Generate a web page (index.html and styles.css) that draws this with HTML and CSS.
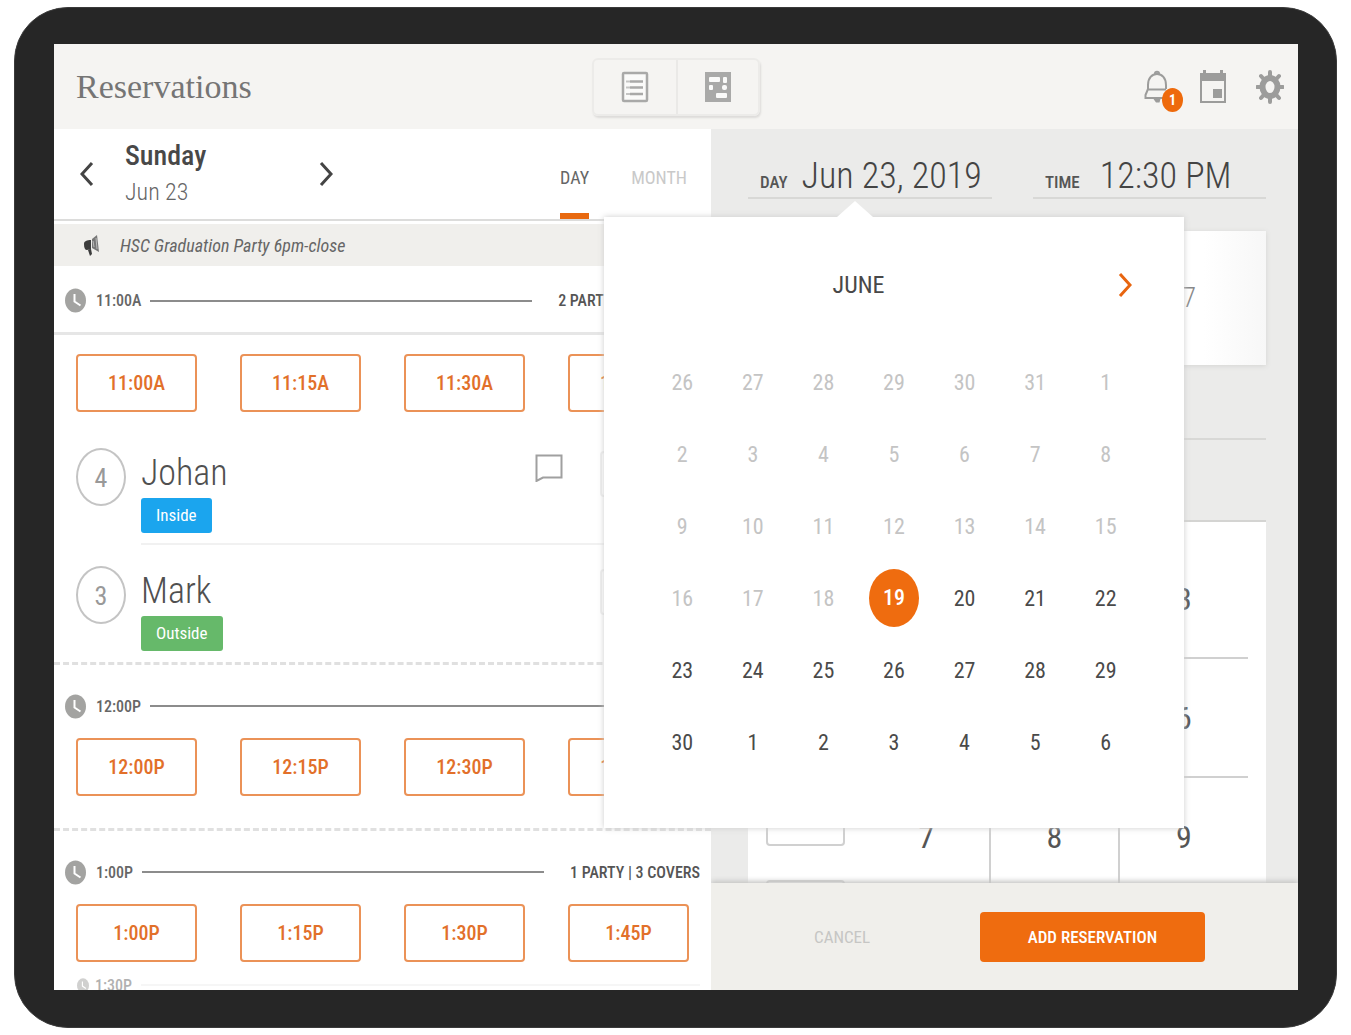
FILE: index.html
```html
<!DOCTYPE html>
<html lang="en">
<head>
  <meta charset="UTF-8">
  <meta name="viewport" content="width=device-width, initial-scale=1">
  <title>Reservations</title>
  <link rel="stylesheet" href="styles.css">
</head>
<body>
  <svg width="0" height="0" class="defs" aria-hidden="true">
    <symbol id="clock" viewBox="0 0 21 25" preserveAspectRatio="none">
      <ellipse cx="10.5" cy="12.5" rx="10.5" ry="12" fill="#a3a3a1"/>
      <path d="M9.5 6v7.5l6 4" fill="none" stroke="#fff" stroke-width="2"/>
    </symbol>
  </svg>

  <div class="tablet">
    <div class="screen">

      <header class="topbar">
        <h1>Reservations</h1>
        <div class="views">
          <button type="button" aria-label="List view">
            <svg width="28" height="32" viewBox="0 0 28 32">
              <rect x="2" y="2" width="24" height="28" rx="1" fill="#fafaf9" stroke="#a9a9a8" stroke-width="2.5"/>
              <path d="M9 10.500h13M9 16.500h13M9 23h13" stroke="#a9a9a8" stroke-width="2.500"/>
              <path d="M5 10.500h4M5 16.500h4M5 23h4" stroke="#c4c4c3" stroke-width="2"/>
            </svg>
          </button>
          <button type="button" aria-label="Floor view">
            <svg width="28" height="32" viewBox="0 0 28 32">
              <rect x="1" y="1" width="26" height="30" fill="#a9a9a8"/>
              <g fill="#fafaf9">
                <rect x="5" y="6" width="11" height="5" rx="1"/>
                <rect x="19" y="6" width="4" height="6" rx="1"/>
                <rect x="5" y="14" width="4" height="5" rx="1"/>
                <rect x="18" y="14" width="5" height="5" rx="2"/>
                <rect x="12" y="22" width="11" height="5" rx="1"/>
              </g>
            </svg>
          </button>
        </div>
        <div class="tools">
          <button type="button" class="tool" aria-label="Notifications">
            <svg width="26" height="34" viewBox="0 0 26 34" fill="none" stroke="#9c9c9b" stroke-width="2">
              <path d="M4 19v-4C4 8 8 4 13 4s9 4 9 11v4M4 19.500h18M4 19l-2.500 6v3h22M11 3.500a2 1.800 0 0 1 4 0"/>
              <path d="M9.500 29h7l-1 3.500h-3.500z" fill="#9c9c9b" stroke="none"/>
            </svg>
            <span class="badge">1</span>
          </button>
          <button type="button" class="tool" aria-label="Calendar">
            <svg width="28" height="34" viewBox="0 0 28 34" fill="#9c9c9b">
              <path d="M1 3h26v8H1zM4 0h3v4H4zM21 0h3v4h-3zM14 19h9v9h-9z"/>
              <rect x="2" y="4" width="24" height="28" fill="none" stroke="#9c9c9b" stroke-width="2"/>
            </svg>
          </button>
          <button type="button" class="tool" aria-label="Settings">
            <svg width="28" height="34" viewBox="0 0 28 34">
              <ellipse cx="14" cy="17" rx="7.500" ry="9" fill="none" stroke="#9c9c9b" stroke-width="6"/>
              <path d="M14 2v5M14 27v5M1 17h4M23 17h4M5 6l3.500 4M23 6l-3.500 4M5 28l3.500-4M23 28l-3.500-4" stroke="#9c9c9b" stroke-width="4" stroke-linecap="round"/>
            </svg>
          </button>
        </div>
      </header>

      <main class="columns">
        <section class="agenda">
          <div class="datebar">
            <button type="button" class="arrow" aria-label="Previous day">
              <svg width="14" height="26" viewBox="0 0 14 26"><path d="M12 2 2 13l10 11" fill="none" stroke="#444" stroke-width="3"/></svg>
            </button>
            <div class="date">
              <strong>Sunday</strong>
              <span>Jun 23</span>
            </div>
            <button type="button" class="arrow" aria-label="Next day">
              <svg width="14" height="26" viewBox="0 0 14 26"><path d="m2 2 10 11L2 24" fill="none" stroke="#444" stroke-width="3"/></svg>
            </button>
            <nav class="tabs">
              <a href="#day" class="active">DAY</a>
              <a href="#month">MONTH</a>
            </nav>
          </div>

          <p class="notice">
            <svg width="18" height="22" viewBox="0 0 18 22">
              <path d="M1 10c0-3 3-4 7-4v9l-4 1c-2 0-3-2-3-6zM5 16l3-1 1 5-2 2z" fill="#3c3c3c"/>
              <path d="M9 5l5-4 2 17-7-4z" fill="#777"/>
              <path d="M10 7l1 6M13 4l1 11" stroke="#bbb"/>
            </svg>
            HSC Graduation Party 6pm-close
          </p>

          <div class="hour pinned">
            <svg width="21" height="25"><use href="#clock"/></svg>
            <h2>11:00A</h2>
            <span class="rule"></span>
            <span class="count">2 PARTIES | 7 COVERS</span>
          </div>
          <div class="slots first">
            <button type="button">11:00A</button>
            <button type="button">11:15A</button>
            <button type="button">11:30A</button>
            <button type="button">11:45A</button>
          </div>

          <ul class="guests">
            <li>
              <span class="size">4</span>
              <div class="guest">
                <h3>Johan</h3>
                <span class="tag inside">Inside</span>
              </div>
              <svg class="note" width="28" height="28" viewBox="0 0 28 28"><path d="M1.500 1.500h25v22H8l-6.500 3.500z" fill="none" stroke="#a0a0a0" stroke-width="2"/></svg>
              <button type="button" class="seat" aria-label="Seat Johan"></button>
            </li>
            <li>
              <span class="size">3</span>
              <div class="guest">
                <h3>Mark</h3>
                <span class="tag outside">Outside</span>
              </div>
              <button type="button" class="seat" aria-label="Seat Mark"></button>
            </li>
          </ul>

          <div class="hour">
            <svg width="21" height="25"><use href="#clock"/></svg>
            <h2>12:00P</h2>
            <span class="rule"></span>
          </div>
          <div class="slots last">
            <button type="button">12:00P</button>
            <button type="button">12:15P</button>
            <button type="button">12:30P</button>
            <button type="button">12:45P</button>
          </div>

          <div class="hour">
            <svg width="21" height="25"><use href="#clock"/></svg>
            <h2>1:00P</h2>
            <span class="rule"></span>
            <span class="count">1 PARTY | 3 COVERS</span>
          </div>
          <div class="slots">
            <button type="button">1:00P</button>
            <button type="button">1:15P</button>
            <button type="button">1:30P</button>
            <button type="button">1:45P</button>
          </div>

          <div class="hour next">
            <svg width="12" height="15"><use href="#clock"/></svg>
            <h2>1:30P</h2>
            <span class="rule"></span>
          </div>
        </section>

        <form class="booking">
          <div class="fields">
            <label class="field day">
              <span>DAY</span>
              <input type="text" value="Jun 23, 2019">
            </label>
            <label class="field time">
              <span>TIME</span>
              <input type="text" value="12:30 PM">
            </label>
          </div>

          <div class="scroll">
            <div class="party">7</div>
            <div class="divider"></div>
            <div class="phone">
              <div class="lines">
                <input type="text" aria-label="Phone">
                <input type="text" aria-label="Extension">
              </div>
              <div class="keypad">
                <button type="button">1</button><button type="button">2</button><button type="button">3</button>
                <button type="button">4</button><button type="button">5</button><button type="button">6</button>
                <button type="button">7</button><button type="button">8</button><button type="button">9</button>
              </div>
            </div>
          </div>

          <div class="actions">
            <button type="button" class="cancel">CANCEL</button>
            <button type="submit" class="add">ADD RESERVATION</button>
          </div>

          <div class="picker">
            <div class="picker-head">
              <h2>JUNE</h2>
              <button type="button" aria-label="Next month">
                <svg width="14" height="26" viewBox="0 0 14 26"><path d="m2 2 10 11L2 24" fill="none" stroke="#e8650f" stroke-width="3"/></svg>
              </button>
            </div>
            <table>
              <tr class="past"><td>26</td><td>27</td><td>28</td><td>29</td><td>30</td><td>31</td><td>1</td></tr>
              <tr class="past"><td>2</td><td>3</td><td>4</td><td>5</td><td>6</td><td>7</td><td>8</td></tr>
              <tr class="past"><td>9</td><td>10</td><td>11</td><td>12</td><td>13</td><td>14</td><td>15</td></tr>
              <tr><td class="past">16</td><td class="past">17</td><td class="past">18</td><td><span class="today">19</span></td><td>20</td><td>21</td><td>22</td></tr>
              <tr><td>23</td><td>24</td><td>25</td><td>26</td><td>27</td><td>28</td><td>29</td></tr>
              <tr><td>30</td><td>1</td><td>2</td><td>3</td><td>4</td><td>5</td><td>6</td></tr>
            </table>
          </div>
        </form>
      </main>
    </div>
  </div>
</body>
</html>
```
FILE: styles.css
```css
* {
  box-sizing: border-box;
}
body {
  margin: 0;
  padding: 7px 14px;
  background: #fff;
  color: #555;
  font-family: "Roboto Condensed", "Liberation Sans Narrow", Roboto, sans-serif;
}
h1, h2, h3, p, ul {
  margin: 0;
  padding: 0;
  font-weight: normal;
}
button, input {
  margin: 0;
  padding: 0;
  border: 0;
  background: none;
  color: inherit;
  font-family: inherit;
}
svg {
  display: block;
  flex: none;
}
.defs {
  position: absolute;
}

/* device */
.tablet {
  height: calc(100vh - 14px);
  padding: 36px 38px 37px 39px;
  border: 1px solid #3a3a3a;
  border-radius: 54px;
  background: #262626;
}
.screen {
  display: flex;
  flex-direction: column;
  height: 100%;
  overflow: hidden;
  background: #fff;
}

/* top bar */
.topbar {
  display: grid;
  grid-template-columns: 1fr auto 1fr;
  align-items: center;
  flex: none;
  height: 85px;
  padding: 0 14px;
  background: #f5f4f2;
}
h1 {
  padding-left: 8px;
  color: #757575;
  font-family: "Liberation Serif", serif;
  font-size: 34px;
}
.views {
  display: flex;
  height: 58px;
  border: 2px solid #ecebe9;
  border-radius: 6px;
  box-shadow: 1px 2px 2px #dddcda;
}
.views button {
  display: flex;
  align-items: center;
  justify-content: center;
  width: 82px;
}
.views button + button {
  border-left: 2px solid #eae9e7;
}
.tools {
  display: flex;
  justify-content: flex-end;
  gap: 29px;
}
.tool {
  position: relative;
}
.badge {
  position: absolute;
  left: 18px;
  top: 18px;
  width: 21px;
  border-radius: 50%;
  background: #ee6a0c;
  color: #fff;
  font-size: 14px;
  font-weight: bold;
  line-height: 24px;
}

.columns {
  display: grid;
  grid-template-columns: 657fr 587fr;
  flex: 1;
  min-height: 0;
}

/* day list */
.agenda {
  overflow: hidden;
}
.datebar {
  display: flex;
  align-items: center;
  height: 92px;
  padding: 0 24px 0 26px;
  border-bottom: 2px solid #dcdcdb;
}
.date {
  width: 194px;
  margin-left: 31px;
}
.date strong, .date span {
  display: block;
  font-size: 28px;
  font-weight: 500;
  line-height: 36px;
}
.date strong {
  color: #484848;
}
.date span {
  color: #666;
  font-size: 24px;
  font-weight: 300;
}
.tabs {
  display: flex;
  align-self: stretch;
  gap: 42px;
  margin-left: auto;
}
.tabs a {
  padding-top: 12px;
  border-bottom: 6px solid transparent;
  color: #c9c9c9;
  font-size: 18px;
  line-height: 74px;
  text-decoration: none;
}
.tabs .active {
  border-color: #e8690f;
  color: #666;
}
.notice {
  display: flex;
  align-items: center;
  gap: 19px;
  height: 42px;
  margin-top: 3px;
  padding-left: 29px;
  background: #f0efec;
  color: #666;
  font-size: 18px;
  font-style: italic;
}
.hour {
  display: flex;
  align-items: center;
  height: 73px;
  padding: 9px 11px 0 11px;
}
.hour h2 {
  margin: 0 9px 0 10px;
  color: #666;
  font-size: 16px;
  font-weight: 500;
}
.rule {
  flex: 1;
  height: 2px;
  background: #8c8c8c;
}
.count {
  margin-left: 26px;
  color: #555;
  font-size: 16px;
  font-weight: 500;
}
.pinned {
  height: 69px;
  padding-top: 3px;
  border-bottom: 3px solid #e6e6e6;
}
.slots {
  display: grid;
  grid-template-columns: repeat(4, 1fr);
  gap: 43px;
  padding: 0 22px;
}
.slots button {
  height: 58px;
  border: 2px solid #eb9257;
  border-radius: 4px;
  color: #e2702a;
  font-size: 20px;
  font-weight: 500;
}
.first {
  padding-top: 19px;
}
.last {
  padding-bottom: 32px;
  border-bottom: 3px dashed #e0e0e0;
}
.guests {
  padding: 19px 0 0 22px;
  border-bottom: 3px dashed #e0e0e0;
  list-style: none;
}
.guests li {
  display: flex;
  align-items: flex-start;
  position: relative;
  height: 118px;
  padding-top: 17px;
}
.guests li:last-child {
  height: 113px;
}
.size {
  width: 50px;
  height: 58px;
  border: 2px solid #c4c4c4;
  border-radius: 50%;
  color: #999;
  font-size: 26px;
  line-height: 56px;
  text-align: center;
}
.guest {
  flex: 1;
  height: 97px;
  margin-left: 15px;
}
.guests li:first-child .guest {
  border-bottom: 2px solid #f1f1f1;
}
h3 {
  color: #505050;
  font-size: 36px;
  font-weight: 300;
  line-height: 50px;
}
.tag {
  display: inline-block;
  padding: 0 15px;
  border-radius: 3px;
  color: #fff;
  font-size: 17px;
  line-height: 35px;
}
.inside {
  background: #1ba5ee;
}
.outside {
  background: #66b96a;
}
.note {
  position: absolute;
  right: 148px;
  top: 23px;
}
.seat {
  position: absolute;
  right: 22px;
  top: 20px;
  width: 89px;
  height: 46px;
  border: 2px solid #eee;
  border-radius: 4px;
}
.next {
  height: 36px;
  padding: 10px 11px 0 23px;
  opacity: 0.5;
}
.next h2 {
  margin-left: 6px;
}
.next .rule {
  background: #eee;
}

/* booking form */
.booking {
  display: flex;
  position: relative;
  flex-direction: column;
  min-height: 0;
  background: #ebebea;
}
.fields {
  display: flex;
  justify-content: space-between;
  flex: none;
  height: 70px;
  padding: 0 32px 0 37px;
}
.field {
  display: flex;
  align-items: baseline;
  gap: 14px;
  padding: 25px 0 0 12px;
  border-bottom: 2px solid #d8d8d6;
}
.field span {
  font-size: 17px;
  font-weight: 500;
}
.field input {
  flex: 1;
  min-width: 0;
  color: #444;
  font-size: 36px;
  font-weight: 300;
  line-height: 44px;
}
.day {
  width: 244px;
}
.time {
  width: 233px;
}
.time input {
  padding-left: 6px;
}
.scroll {
  flex: 1;
  min-height: 0;
  overflow: hidden;
  padding: 32px 32px 0 37px;
}
.party {
  height: 134px;
  padding-right: 70px;
  background: linear-gradient(to right, #fff 88%, #f7f7f7);
  box-shadow: 0 1px 5px #d4d4d2;
  color: #888;
  font-size: 28px;
  font-weight: 300;
  line-height: 134px;
  text-align: right;
}
.divider {
  height: 75px;
  border-bottom: 2px solid #d8d8d6;
}
.phone {
  display: flex;
  gap: 18px;
  margin-top: 80px;
  padding: 18px;
  border-top: 2px solid #d4d4d2;
  background: #fff;
}
.lines {
  display: flex;
  flex-direction: column;
  gap: 34px;
  width: 79px;
  padding-top: 197px;
}
.lines input {
  width: 100%;
  height: 109px;
  border: 2px solid #d0d0d0;
  border-radius: 4px;
}
.keypad {
  display: grid;
  grid-template-columns: repeat(3, 1fr);
  align-content: start;
  flex: 1;
}
.keypad button {
  height: 119px;
  border: 0 solid #d0d0d0;
  border-width: 0 2px 2px 0;
  font-size: 32px;
}
.keypad button:nth-child(3n) {
  border-right: 0;
}
.actions {
  display: flex;
  z-index: 1;
  align-items: center;
  justify-content: space-between;
  flex: none;
  height: 107px;
  padding: 0 93px 0 103px;
  background: #f0efeb;
  box-shadow: 0 -2px 5px #c4c4c2;
  clip-path: inset(-8px 0 0 0);
}
.cancel {
  color: #c6c6c4;
  font-size: 17px;
}
.add {
  width: 225px;
  height: 50px;
  border-radius: 4px;
  background: #ef6c0f;
  color: #fff;
  font-size: 17px;
  font-weight: 500;
}

/* date picker */
.picker {
  position: absolute;
  z-index: 2;
  top: 88px;
  right: 114px;
  width: 580px;
  height: 611px;
  padding: 0 43px;
  background: #fff;
  box-shadow: 0 0 6px #ccc;
}
.picker::before {
  content: "";
  position: absolute;
  top: -16px;
  left: 233px;
  border: 18px solid transparent;
  border-top: 0;
  border-bottom: 16px solid #fff;
}
.picker-head {
  display: flex;
  align-items: center;
  height: 129px;
  padding: 6px 9px 0 0;
}
.picker-head h2 {
  flex: 1;
  color: #484848;
  font-size: 24px;
  text-align: center;
}
.picker-head button {
  margin-left: 48px;
}
table {
  width: 100%;
  table-layout: fixed;
  border-collapse: collapse;
}
td {
  height: 72px;
  padding: 0;
  color: #4a4a4a;
  font-size: 22px;
  text-align: center;
}
.past td, .past {
  color: #c4c4c4;
}
.today {
  display: block;
  width: 50px;
  margin: 0 auto;
  border-radius: 50%;
  background: #ef6c0f;
  color: #fff;
  font-weight: 500;
  line-height: 58px;
}
```
